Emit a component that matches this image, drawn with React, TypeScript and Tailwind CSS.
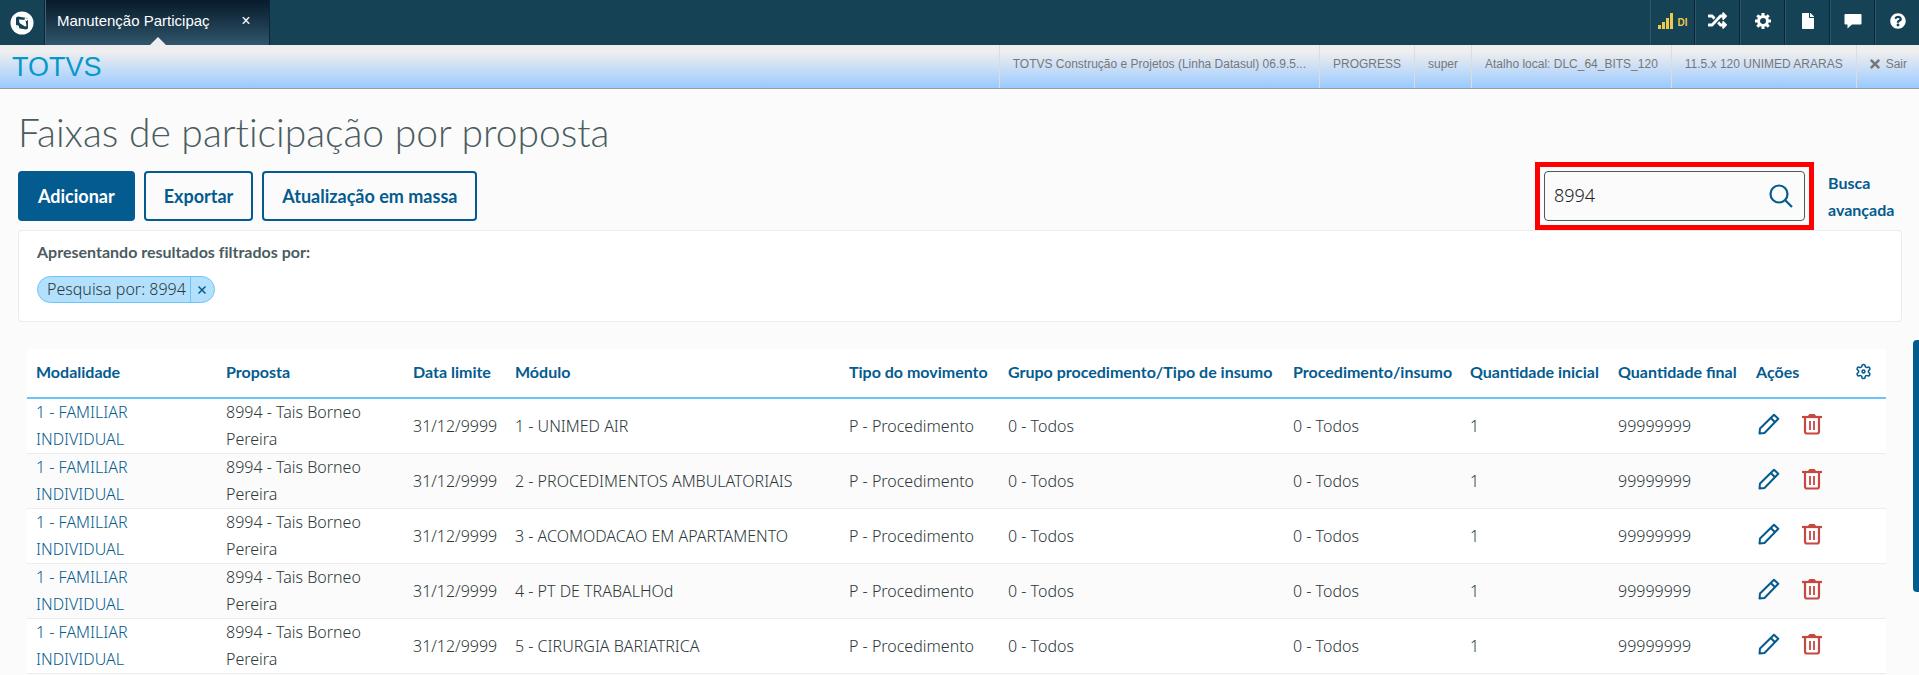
import React, { useState } from 'react';
import { FaFile, FaRandom, FaQuestionCircle, FaTimes } from 'react-icons/fa';

const Logo = () => (
  <svg width="24" height="24" viewBox="0 0 24 24">
    <circle cx="12" cy="12" r="11.5" fill="#fff" />
    <path d="M6 6.500 8 5.500 17 7 18 8.500V17.500L16 18.500 7.500 17 6 15.500Z" fill="#154254" />
    <path d="M9 8.500 15.500 9 16.500 15 15 15.500 9.500 12Z" fill="#fff" />
    <path d="M15 6.500 18.500 8.500 16.500 10 14.500 9Z M5.500 14 8.500 14.500 9.500 17.500 7 17.500Z" fill="#fff" />
  </svg>
);

const SignalIcon = () => (
  <svg width="16" height="16" viewBox="0 0 16 16" fill="currentColor">
    <path d="M0 12h3v4H0zM4 9h3v7H4zM8 5h3v11H8zM12 0h3v16h-3z" />
  </svg>
);

const CogIcon = () => (
  <svg width="16" height="16" viewBox="0 0 16 16" fill="none" stroke="currentColor">
    <circle cx="8" cy="8" r="4.5" strokeWidth="3" />
    <path
      d="M8 0v3M8 13v3M0 8h3M13 8h3M2.3 2.3l2.1 2.1M11.6 11.6l2.1 2.1M2.3 13.7l2.1-2.1M11.6 4.4l2.1-2.1"
      strokeWidth="3"
    />
  </svg>
);

const CommentIcon = () => (
  <svg width="18" height="16" viewBox="0 0 18 16" fill="currentColor">
    <path d="M1.500 1h15a1 1 0 0 1 1 1v8.500a1 1 0 0 1-1 1H8L3.500 15.500V11.500h-2a1 1 0 0 1-1-1V2a1 1 0 0 1 1-1z" />
  </svg>
);

const GearIcon = () => (
  <svg width="17" height="17" viewBox="0 0 24 24" fill="none" stroke="currentColor" strokeWidth="2.2">
    <path d="M12.22 2h-.44a2 2 0 0 0-2 2v.18a2 2 0 0 1-1 1.73l-.43.25a2 2 0 0 1-2 0l-.15-.08a2 2 0 0 0-2.73.73l-.22.38a2 2 0 0 0 .73 2.73l.15.1a2 2 0 0 1 1 1.72v.51a2 2 0 0 1-1 1.74l-.15.09a2 2 0 0 0-.73 2.73l.22.38a2 2 0 0 0 2.73.73l.15-.08a2 2 0 0 1 2 0l.43.25a2 2 0 0 1 1 1.73V20a2 2 0 0 0 2 2h.44a2 2 0 0 0 2-2v-.18a2 2 0 0 1 1-1.73l.43-.25a2 2 0 0 1 2 0l.15.08a2 2 0 0 0 2.73-.73l.22-.39a2 2 0 0 0-.73-2.73l-.15-.08a2 2 0 0 1-1-1.74v-.5a2 2 0 0 1 1-1.74l.15-.09a2 2 0 0 0 .73-2.73l-.22-.38a2 2 0 0 0-2.73-.73l-.15.08a2 2 0 0 1-2 0l-.43-.25a2 2 0 0 1-1-1.73V4a2 2 0 0 0-2-2z" />
    <circle cx="12" cy="12" r="2" />
  </svg>
);

const PencilIcon = () => (
  <svg width="22" height="22" viewBox="0 0 22 22" fill="none" stroke="currentColor" strokeWidth="2" strokeLinejoin="round">
    <path d="M1.500 20.500 2 15.500 16 1.700 20.300 5.800 6.500 20 Z" />
    <path d="M12.800 5 17 9.200" />
  </svg>
);

const TrashIcon = () => (
  <svg width="20" height="22" viewBox="0 0 20 22" fill="none" stroke="currentColor" strokeWidth="2.2">
    <path d="M0 4h20" />
    <path d="M5.500 3.500 7.500 1h5l2 2.500z" fill="currentColor" stroke="none" />
    <path d="M3 4v14.500q0 2 2 2h10q2 0 2-2V4" />
    <path d="M8 8v9M12 8v9" strokeWidth="1.800" />
  </svg>
);

const SearchIcon = () => (
  <svg width="24" height="24" viewBox="0 0 24 24" fill="none" stroke="currentColor" strokeWidth="2.2">
    <circle cx="10" cy="10" r="8.500" />
    <path d="M16 16 23 23" />
  </svg>
);

const navItems = [
  { id: 'random', label: 'Alternar', icon: <FaRandom size={19} /> },
  { id: 'config', label: 'Configurações', icon: <CogIcon /> },
  { id: 'file', label: 'Documentos', icon: <FaFile size={16} /> },
  { id: 'comment', label: 'Mensagens', icon: <CommentIcon /> },
  { id: 'help', label: 'Ajuda', icon: <FaQuestionCircle size={16} /> },
];

const sessionInfo = [
  'TOTVS Construção e Projetos (Linha Datasul) 06.9.5...',
  'PROGRESS',
  'super',
  'Atalho local: DLC_64_BITS_120',
  '11.5.x 120 UNIMED ARARAS',
];

const columns = [
  { label: 'Modalidade', width: 'w-[189px]' },
  { label: 'Proposta', width: 'w-[187px]' },
  { label: 'Data limite', width: 'w-[102px]' },
  { label: 'Módulo', width: 'w-auto' },
  { label: 'Tipo do movimento', width: 'w-[159px]' },
  { label: 'Grupo procedimento/Tipo de insumo', width: 'w-[285px]' },
  { label: 'Procedimento/insumo', width: 'w-[177px]' },
  { label: 'Quantidade inicial', width: 'w-[148px]' },
  { label: 'Quantidade final', width: 'w-[138px]' },
  { label: 'Ações', width: 'w-[96px]' },
];

const modules = [
  '1 - UNIMED AIR',
  '2 - PROCEDIMENTOS AMBULATORIAIS',
  '3 - ACOMODACAO EM APARTAMENTO',
  '4 - PT DE TRABALHOd',
  '5 - CIRURGIA BARIATRICA',
];

const TopNav = () => (
  <header className="flex h-[45px] bg-[#154254] font-['Liberation_Sans',sans-serif] text-white">
    <button aria-label="Início" className="flex w-[45px] items-center justify-center border-r border-[#0b2636]">
      <Logo />
    </button>
    <div className="relative flex w-[225px] items-center border-r border-l border-r-[#0b2636] border-l-[#3c6273] bg-linear-to-b from-[#071b2b] to-[#31566b] pb-[3px] pl-[11px]">
      <span className="w-[156px] text-[15px] whitespace-nowrap">Manutenção Participaç</span>
      <button aria-label="Fechar aba" className="ml-[23px] flex w-5 justify-center text-base">×</button>
      <span className="absolute bottom-0 left-[104px] border-x-8 border-b-8 border-x-transparent border-b-[#eeeef2]" />
    </div>
    <nav className="ml-auto flex">
      <button className="flex w-[45px] items-center justify-center gap-1 border-r border-l border-r-[#0b2636] border-l-[#2f5668] pb-1 text-[#edc84b]">
        <SignalIcon />
        <span className="pt-1 text-[10px] font-bold">DI</span>
      </button>
      {navItems.map((item) => (
        <button
          key={item.id}
          aria-label={item.label}
          className="flex w-[45px] items-center justify-center border-r border-l border-r-[#0b2636] border-l-[#2f5668] pb-1 last:w-11 last:border-r-0"
        >
          {item.icon}
        </button>
      ))}
    </nav>
  </header>
);

const SessionBar = () => (
  <div className="flex h-11 items-stretch border-b border-[#9a9a9a] bg-linear-to-b from-[#efeeee] from-15% to-[#99caff] font-['Liberation_Sans',sans-serif] text-xs text-[#777]">
    <span className="flex items-center pt-0.5 pl-3 text-[27px] text-[#0599cb]">TOTVS</span>
    <div className="ml-auto flex">
      {sessionInfo.map((info) => (
        <span key={info} className="flex items-center border-l border-[#dcdcdc] px-[13px] pb-1.5">
          {info}
        </span>
      ))}
      <a href="#sair" className="flex items-center gap-1 border-l border-[#dcdcdc] pr-3 pb-1.5 pl-[11px]">
        <FaTimes size={14} />
        Sair
      </a>
    </div>
  </div>
);

const App: React.FC = () => {
  const [search, setSearch] = useState('8994');

  return (
    <div className="relative min-h-screen bg-[#fbfbfb] font-['Lato',sans-serif] text-[#2c3739]">
      <TopNav />
      <SessionBar />

      <main className="pt-5 pr-[17px] pl-[18px]">
        <h1 className="text-[39px] leading-[46px] font-light text-[#4a5c60] [font-variant-ligatures:none]">
          Faixas de participação por proposta
        </h1>

        <div className="mt-4 flex h-[50px] items-center">
          <div className="flex h-full gap-[9px] text-lg font-bold text-[#045b8f]">
            <button className="rounded border-2 border-[#045b8f] bg-[#045b8f] px-[18px] text-white">Adicionar</button>
            <button className="rounded border-2 border-[#045b8f] px-[18px]">Exportar</button>
            <button className="rounded border-2 border-[#045b8f] px-[18px] [font-variant-ligatures:none]">Atualização em massa</button>
          </div>
          <div className="relative ml-auto h-full w-[261px] outline-[5px] outline-offset-4 outline-[#fe0000]">
            <input
              type="text"
              aria-label="Pesquisar"
              value={search}
              onChange={(e) => setSearch(e.target.value)}
              className="h-full w-full rounded border border-[#4a5c60] pr-12 pb-0.5 pl-[9px] font-['Noto_Sans',sans-serif] text-lg font-light text-[#1d2426]"
            />
            <button aria-label="Buscar" className="absolute inset-y-0 right-3 text-[#045b8f]">
              <SearchIcon />
            </button>
          </div>
          <a href="#busca-avancada" className="ml-[23px] w-[74px] text-base leading-[27px] font-bold text-[#045b8f]">
            Busca avançada
          </a>
        </div>

        <section className="mt-[9px] rounded border border-[#ececec] bg-white px-[18px] pt-[7px] pb-[18px]">
          <p className="text-base leading-[27px] font-bold text-[#4a5c60] [font-variant-ligatures:none]">
            Apresentando resultados filtrados por:
          </p>
          <div className="mt-[11px] inline-flex h-[27px] items-stretch rounded-full border border-[#6ac5f8] bg-[#b3e1fd] align-top">
            <span className="pr-1 pl-[9px] font-['Noto_Sans',sans-serif] text-base leading-6 font-light">Pesquisa por: 8994</span>
            <button aria-label="Remover filtro" className="flex w-6 items-center justify-center border-l border-[#6ac5f8] text-[#045b8f]">
              <svg width="8" height="8" viewBox="0 0 8 8" stroke="currentColor" strokeWidth="1.5">
                <path d="M.5.5l7 7M7.500.5l-7 7" />
              </svg>
            </button>
          </div>
        </section>

        <div className="mt-[27px] mr-4 ml-[9px]">
          <table className="w-full min-w-[1700px] table-fixed bg-white text-left text-base leading-[27px]">
            <thead>
              <tr className="h-[49px] border-b-2 border-[#6ac5f8] text-[#045b8f]">
                {columns.map((col) => (
                  <th key={col.label} className={`${col.width} pr-2 pb-1 pl-2.5 font-bold whitespace-nowrap first:pl-[9px]`}>
                    {col.label}
                  </th>
                ))}
                <th className="w-11 pr-0.5 pb-1">
                  <button aria-label="Gerenciar colunas" className="flex w-full justify-center">
                    <GearIcon />
                  </button>
                </th>
              </tr>
            </thead>
            <tbody className="font-['Noto_Sans',sans-serif] font-light">
              {modules.map((mod) => (
                <tr key={mod} className="border-b border-[#ececec] even:bg-[#fbfbfb]">
                  <td className="pr-[60px] pl-[9px]">
                    <a href="#modalidade" className="text-[#045b8f]">1 - FAMILIAR INDIVIDUAL</a>
                  </td>
                  <td className="pr-8 pl-2.5">8994 - Tais Borneo Pereira</td>
                  <td className="pr-1 pl-2.5">31/12/9999</td>
                  <td className="pr-2 pl-2.5">{mod}</td>
                  <td className="pr-2 pl-2.5">P - Procedimento</td>
                  <td className="pr-2 pl-2.5">0 - Todos</td>
                  <td className="pr-2 pl-2.5">0 - Todos</td>
                  <td className="pr-2 pl-2.5">1</td>
                  <td className="pr-2 pl-2.5">99999999</td>
                  <td className="pl-3" colSpan={2}>
                    <div className="flex gap-[22px] pb-1">
                      <button aria-label="Editar" className="text-[#045b8f]">
                        <PencilIcon />
                      </button>
                      <button aria-label="Excluir" className="text-[#c64840]">
                        <TrashIcon />
                      </button>
                    </div>
                  </td>
                </tr>
              ))}
            </tbody>
          </table>
        </div>
      </main>

      <div className="absolute top-[340px] right-0 h-[252px] w-1.5 rounded-l bg-[#045b8f]" />
    </div>
  );
};

export default App;
